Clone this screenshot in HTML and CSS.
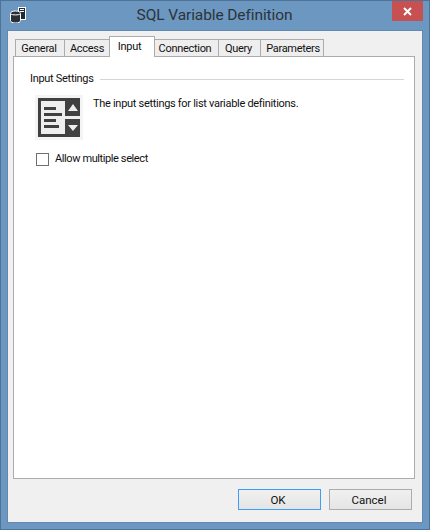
FILE: index.html
```html
<!DOCTYPE html>
<html lang="en">
<head>
    <meta charset="UTF-8">
    <title>SQL Variable Definition</title>
    <link rel="stylesheet" href="styles.css">
</head>
<body>
    <div class="window">
        <div class="titlebar">
            <svg class="app-icon" width="16" height="16" viewBox="0 0 16 16">
                <rect x="8.500" y="0.500" width="7" height="12" fill="#1e2a36" stroke="#fff"/>
                <rect x="10" y="2" width="4" height="1" fill="#fff"/>
                <rect x="10" y="4" width="4" height="1" fill="#fff"/>
                <path d="M0.500 6.500c0-1.500 2-2.500 5-2.500s5 1 5 2.500v7c0 1.500-2 2.500-5 2.500s-5-1-5-2.500z" fill="#2a2f36" stroke="#fff"/>
                <path d="M1 7c1 1.200 8 1.200 9 0" fill="none" stroke="#fff"/>
            </svg>
            <div class="title">SQL Variable Definition</div>
            <div class="close">
                <svg width="9" height="9" viewBox="0 0 9 9"><path d="M1 1l7 7M8 1l-7 7" stroke="#fff" stroke-width="2"/></svg>
            </div>
        </div>
        <div class="client">
            <div class="tabs">
                <div class="tab tab-general">General</div>
                <div class="tab tab-access">Access</div>
                <div class="tab tab-input active">Input</div>
                <div class="tab tab-connection">Connection</div>
                <div class="tab tab-query">Query</div>
                <div class="tab tab-parameters">Parameters</div>
            </div>
            <div class="panel">
                <div class="group-head">
                    <span>Input Settings</span>
                    <div class="rule"></div>
                </div>
                <div class="intro">
                    <div class="icon-box">
                        <svg width="42" height="39" viewBox="0 0 42 39">
                            <rect width="42" height="39" fill="#404040"/>
                            <rect x="3" y="3" width="24" height="33" fill="#eeeeee"/>
                            <rect x="6" y="9" width="12" height="3" fill="#404040"/>
                            <rect x="6" y="15" width="18" height="3" fill="#404040"/>
                            <rect x="6" y="21" width="12" height="3" fill="#404040"/>
                            <rect x="6" y="27" width="15" height="3" fill="#404040"/>
                            <rect x="27" y="18" width="15" height="3" fill="#eeeeee"/>
                            <path d="M30 13l5-7 5 7zM30 27h10l-5 6z" fill="#eeeeee"/>
                        </svg>
                    </div>
                    <p class="desc">The input settings for list variable definitions.</p>
                </div>
                <label class="check">
                    <span class="box"></span>
                    <span>Allow multiple select</span>
                </label>
            </div>
            <div class="buttons">
                <button class="btn default">OK</button>
                <button class="btn">Cancel</button>
            </div>
        </div>
    </div>
</body>
</html>
```

FILE: styles.css
```css
html, body {
    margin: 0;
    padding: 0;
}
body {
    width: 430px;
    height: 530px;
    overflow: hidden;
    font-family: Roboto, "Noto Sans", sans-serif;
    font-size: 11px;
    letter-spacing: -0.3px;
    color: #111;
}
.window {
    box-sizing: border-box;
    width: 430px;
    height: 530px;
    display: flex;
    flex-direction: column;
    background: #6b97c1;
    border: 1px solid #4f7396;
    padding: 0 7px 7px;
}
.titlebar {
    height: 30px;
    display: flex;
    align-items: flex-start;
    flex: none;
}
.app-icon {
    margin: 6px 0 0 2px;
    flex: none;
}
.title {
    flex: 1;
    text-align: center;
    font-size: 15.500px;
    letter-spacing: -0.1px;
    line-height: 20px;
    margin-top: 4px;
    padding-left: 11px;
    color: #2e3338;
}
.close {
    width: 31px;
    height: 20px;
    margin: 0 -1px 0 0;
    background: #c75050;
    display: flex;
    align-items: center;
    justify-content: center;
    flex: none;
}
.client {
    flex: 1;
    background: #f0f0f0;
    box-shadow: 0 0 0 1px #5f89b1;
    display: flex;
    flex-direction: column;
    padding: 5px 7px 0 5px;
}
.tabs {
    display: flex;
    align-items: flex-end;
    height: 21px;
    padding-left: 2px;
    margin-bottom: -1px;
    position: relative;
    z-index: 1;
}
.tab {
    box-sizing: border-box;
    height: 17px;
    border: 1px solid #acacac;
    border-bottom: none;
    background: #eeeeee;
    text-align: center;
    line-height: 17px;
    margin-bottom: 1px;
    margin-right: -1px;
    white-space: nowrap;
}
.tab-general { width: 50px; padding-right: 2px; }
.tab-access { width: 46px; }
.tab-input { width: 46px; padding-right: 5px; }
.tab-connection { width: 65px; padding-right: 3px; }
.tab-query { width: 43px; padding-right: 2px; }
.tab-parameters { width: 64px; padding-left: 2px; }
.tab.active {
    height: 21px;
    margin-bottom: 0;
    background: #fff;
    line-height: 19px;
    position: relative;
    z-index: 1;
}
.panel {
    box-sizing: border-box;
    height: 423px;
    background: #fff;
    border: 1px solid #acacac;
    padding: 14px 10px 0 16px;
    flex: none;
}
.group-head {
    display: flex;
    align-items: center;
    gap: 6px;
    line-height: 16px;
}
.rule {
    flex: 1;
    height: 1px;
    background: #d5d5d5;
}
.intro {
    display: flex;
    margin: 8px 0 0 5px;
}
.icon-box {
    background: #f4f4f4;
    padding: 3px;
    display: flex;
    flex: none;
}
.desc {
    margin: 1px 0 0 10px;
    line-height: 16px;
}
.check {
    display: flex;
    align-items: center;
    gap: 6px;
    margin: 11px 0 0 6px;
    line-height: 16px;
    letter-spacing: -0.4px;
}
.box {
    box-sizing: border-box;
    width: 13px;
    height: 13px;
    border: 1px solid #707070;
    background: #fff;
}
.buttons {
    display: flex;
    justify-content: flex-end;
    gap: 8px;
    margin-top: 10px;
    padding-right: 3px;
}
.btn {
    box-sizing: border-box;
    width: 83px;
    height: 21px;
    padding: 0 3px 0 0;
    border: 1px solid #acacac;
    background: linear-gradient(#f0f0f0, #e5e5e5);
    font: inherit;
    font-size: 11.500px;
    letter-spacing: 0;
    color: inherit;
}
.btn.default {
    border-color: #3c9dfb;
}
```
